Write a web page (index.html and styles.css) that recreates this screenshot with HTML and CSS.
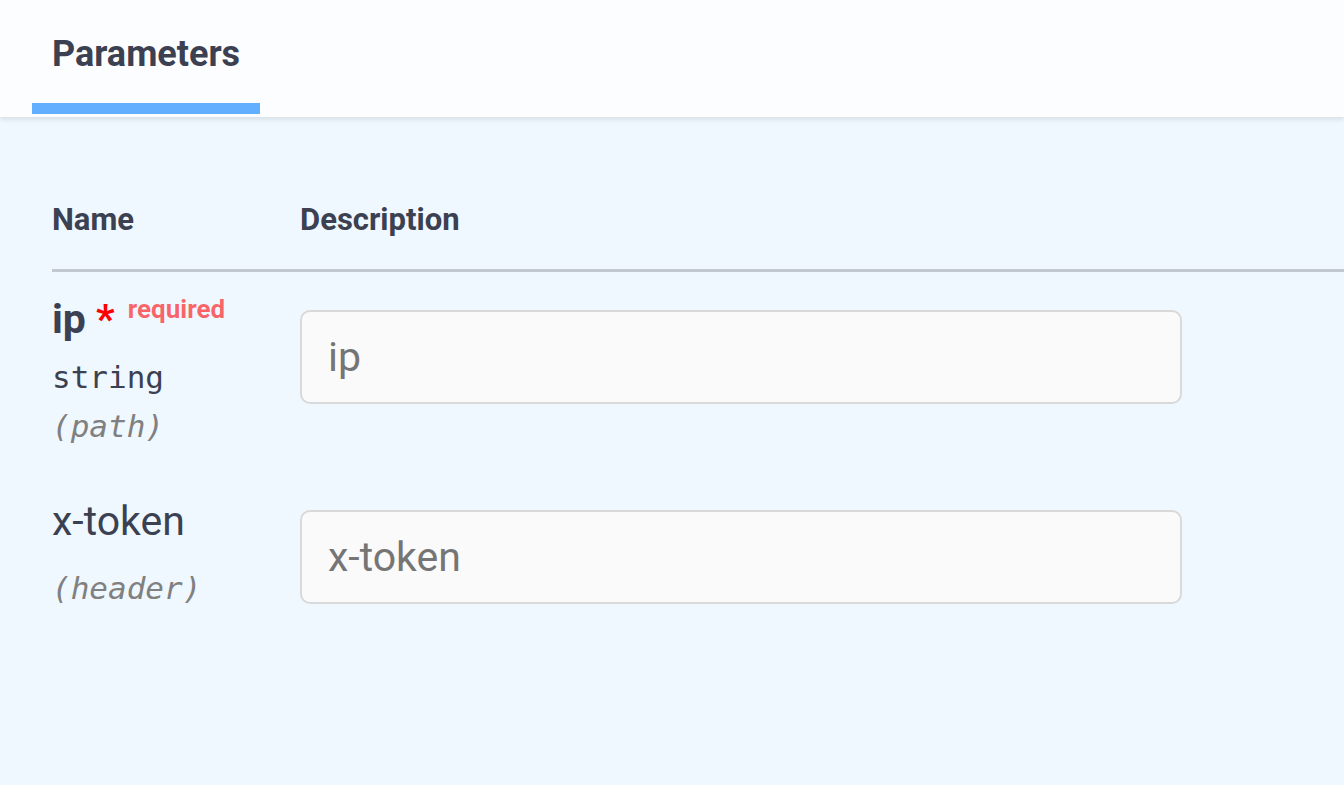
FILE: index.html
```html
<!DOCTYPE html>
<html lang="en">
<head>
<meta charset="utf-8">
<title>Parameters</title>
<link rel="stylesheet" href="styles.css">
</head>
<body>
<div class="section-header">
  <div class="tab">
    <h4 class="tab-title">Parameters</h4>
    <div class="tab-bar"></div>
  </div>
</div>
<div class="params">
  <div class="params-head">
    <div class="col-name">Name</div>
    <div class="col-desc">Description</div>
  </div>
  <div class="param-row">
    <div class="col-name cell-name">
      <div class="param-name bold">ip<span class="star">&nbsp;*</span><span class="required">required</span></div>
      <div class="param-type">string</div>
      <div class="param-in">(path)</div>
    </div>
    <div class="col-desc cell-desc">
      <input class="param-input" type="text" placeholder="ip">
    </div>
  </div>
  <div class="param-row">
    <div class="col-name cell-name plain">
      <div class="param-name">x-token</div>
      <div class="param-in only">(header)</div>
    </div>
    <div class="col-desc cell-desc">
      <input class="param-input" type="text" placeholder="x-token">
    </div>
  </div>
</div>
</body>
</html>
```
FILE: styles.css
```css
html, body {
  margin: 0;
  padding: 0;
}
body {
  background: #eff7ff;
  font-family: Roboto, "Liberation Sans", sans-serif;
  color: #3b4151;
  height: 785px;
  overflow: hidden;
}
.section-header {
  position: relative;
  z-index: 1;
  height: 117px;
  box-sizing: border-box;
  padding: 36px 0 0 32px;
  background: #fcfdff;
  box-shadow: 0 2.5px 5px rgba(0, 0, 0, 0.1);
  display: flex;
}
.tab {
  width: 228px;
  display: flex;
  flex-direction: column;
}
.tab-title {
  margin: 0;
  padding-left: 20px;
  font-size: 36px;
  line-height: 36px;
  font-weight: 700;
  color: #3b4151;
  white-space: nowrap;
}
.tab-bar {
  margin-top: 31px;
  height: 11px;
  background: #61affe;
}
.params {
  padding-left: 52px;
}
.params-head {
  display: flex;
  padding-top: 87px;
  padding-bottom: 34px;
  border-bottom: 3px solid rgba(59, 65, 81, 0.25);
  font-size: 31px;
  line-height: 31px;
  font-weight: 700;
}
.col-name {
  width: 248px;
  flex: none;
}
.col-desc {
  flex: 1;
}
.param-row {
  display: flex;
  height: 200px;
}
.cell-name {
  padding-top: 27px;
}
.cell-name.plain {
  padding-top: 29px;
}
.cell-desc {
  padding-top: 38px;
}
.param-name {
  font-size: 41px;
  line-height: 41px;
  white-space: nowrap;
}
.param-name.bold {
  font-weight: 700;
}
.star {
  color: #ff0000;
}
.required {
  position: relative;
  top: -15.5px;
  padding: 13px;
  font-size: 26px;
  font-weight: 700;
  color: rgba(255, 0, 0, 0.6);
}
.param-type {
  margin-top: 8px;
  font-family: "DejaVu Sans Mono", monospace;
  font-size: 31px;
  line-height: 49px;
  color: #3b4151;
}
.param-in {
  font-family: "DejaVu Sans Mono", monospace;
  font-size: 31px;
  line-height: 49px;
  font-style: italic;
  color: #808080;
}
.param-in.only {
  margin-top: 22px;
}
.param-input {
  display: block;
  width: 882px;
  height: 94px;
  box-sizing: border-box;
  margin: 0;
  padding: 0 26px;
  border: 2.5px solid #d9d9d9;
  border-radius: 10px;
  background: #fafafa;
  font-family: Roboto, "Liberation Sans", sans-serif;
  font-size: 41px;
  color: #3b4151;
  outline: none;
}
.param-input::placeholder {
  color: #757575;
  opacity: 1;
}
```
